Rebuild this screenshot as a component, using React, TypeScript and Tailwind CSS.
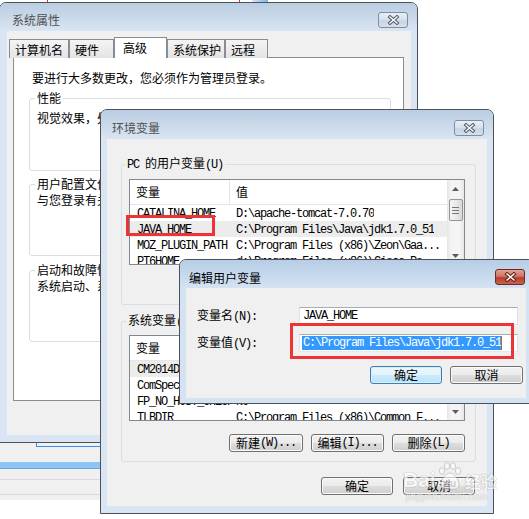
import type { ReactNode } from "react"

type Row = { name: string; value: string; sel?: boolean }

const mono = "font-['Liberation_Mono','Noto_Sans_CJK_SC',monospace] tracking-[-1.2px]"

const M = ({ children }: { children: ReactNode }) => <span className={mono}>{children}</span>

const CloseBtn = ({ red = false, top }: { red?: boolean; top: string }) => (
	<div
		className={`${top} flex h-[16px] w-[30px] shrink-0 items-center justify-center rounded-[3px] border ${
			red
				? "border-[#6e2a22] bg-[linear-gradient(#e2a093,#d27364_45%,#b8402f_55%,#c9604e)]"
				: "border-[#7d8ea3] bg-[linear-gradient(#e8eef5,#d9e3ee_45%,#c7d4e2_55%,#d5e0ec)]"
		}`}>
		<svg width="13" height="10" viewBox="0 0 13 10">
			<path d="M3 2 L10 8 M10 2 L3 8" stroke={red ? "#5b1d15" : "#4b5667"} strokeWidth="3.4" strokeLinecap="square" fill="none" />
			<path d="M3 2 L10 8 M10 2 L3 8" stroke="#ffffff" strokeWidth="1.5" strokeLinecap="square" fill="none" />
		</svg>
	</div>
)

const Win = ({
	title,
	active = false,
	className,
	barClass,
	titleTop,
	closeTop,
	bodyClass,
	children,
}: {
	title: string
	active?: boolean
	className: string
	barClass: string
	titleTop: string
	closeTop: string
	bodyClass: string
	children: ReactNode
}) => (
	<div className={`absolute flex flex-col rounded-t-[7px] border border-[#4d5158] ${active ? "bg-[#d4e3f3]" : "bg-[#d9e5f2]"} ${className}`}>
		<div
			className={`flex shrink-0 items-start justify-between rounded-t-[6px] ${
				active ? "bg-[linear-gradient(#b7cde6,#d4e3f3)]" : "bg-[linear-gradient(#bacde1,#d9e5f2)]"
			} ${barClass}`}>
			<span className={`${titleTop} leading-[16px] ${active ? "text-black" : "text-[#505050]"}`}>{title}</span>
			<CloseBtn red={active} top={closeTop} />
		</div>
		<div className={`bg-[#f0f0f0] ${bodyClass}`}>{children}</div>
	</div>
)

const Btn = ({ children, w, primary = false }: { children: ReactNode; w: string; primary?: boolean }) => (
	<div
		className={`flex h-[18px] ${w} shrink-0 items-center justify-center rounded-[3px] border leading-[14px] ${
			primary
				? "border-[#3c7fb1] bg-[linear-gradient(#edf7fd,#e1f2fc_50%,#cdeafb_50%,#bfe2f6)] shadow-[inset_0_0_0_1px_#d4eefc]"
				: "border-[#707070] bg-[linear-gradient(#f2f2f2,#ebebeb_50%,#dddddd_50%,#cfcfcf)] shadow-[inset_0_0_0_1px_#fbfbfb]"
		}`}>
		{children}
	</div>
)

const Arrow = ({ down = false }: { down?: boolean }) => (
	<div className="flex h-[17px] w-full shrink-0 items-center justify-center">
		<svg width="7" height="4" viewBox="0 0 7 4">
			<path d={down ? "M0 0 L7 0 L3.5 4Z" : "M0 4 L3.5 0 L7 4Z"} fill="#5c5c5c" />
		</svg>
	</div>
)

const ScrollBar = () => (
	<div className="flex w-[17px] shrink-0 flex-col items-center bg-[linear-gradient(90deg,#e6e6e6,#f4f4f4_25%,#f4f4f4_75%,#e6e6e6)]">
		<Arrow />
		<div className="mt-[2px] flex h-[22px] w-[14px] flex-col items-center justify-center gap-[2px] rounded-[2px] border border-[#959595] bg-[linear-gradient(90deg,#f5f5f5,#e9e9e9_50%,#d8d8d8)]">
			<div className="h-px w-[7px] bg-[#777777]" />
			<div className="h-px w-[7px] bg-[#777777]" />
			<div className="h-px w-[7px] bg-[#777777]" />
		</div>
		<div className="flex-1" />
		<Arrow down />
	</div>
)

const VarList = ({ rows, className }: { rows: Row[]; className: string }) => (
	<div className={`flex overflow-hidden border border-[#828790] bg-white ${className}`}>
		<div className="flex min-w-0 flex-1 flex-col">
			<div className="flex h-[25px] shrink-0 border-b border-[#e5e5e5]">
				<div className="flex w-[100px] items-center border-r border-[#e5e5e5] pl-[6px]">变量</div>
				<div className="flex items-center pl-[6px]">值</div>
			</div>
			{rows.map((r) => (
				<div key={r.name} className={`flex h-[16px] shrink-0 items-center whitespace-nowrap ${r.sel ? "bg-[#ececec]" : ""}`}>
					<div className="w-[100px] shrink-0 overflow-hidden pl-[7px]">
						<M>{r.name}</M>
					</div>
					<div className="overflow-hidden pl-[6px]">
						<M>{r.value}</M>
					</div>
				</div>
			))}
		</div>
		<ScrollBar />
	</div>
)

const userVars: Row[] = [
	{ name: "CATALINA_HOME", value: "D:\\apache-tomcat-7.0.70" },
	{ name: "JAVA_HOME", value: "C:\\Program Files\\Java\\jdk1.7.0_51", sel: true },
	{ name: "MOZ_PLUGIN_PATH", value: "C:\\Program Files (x86)\\Zeon\\Gaa..." },
	{ name: "PT6HOME", value: "d:\\Program Files (x86)\\Cisco Pa..." },
	{ name: "TEMP", value: "%USERPROFILE%\\AppData\\Local\\Temp" },
]

const sysVars: Row[] = [
	{ name: "CM2014DIR", value: "C:\\Program Files (x86)\\Common F...", sel: true },
	{ name: "ComSpec", value: "C:\\Windows\\system32\\cmd.exe" },
	{ name: "FP_NO_HOST_CHECK", value: "NO" },
	{ name: "TLBDIR", value: "C:\\Program Files (x86)\\Common F..." },
]

const tabs = [
	{ label: "计算机名", w: "w-[60px]" },
	{ label: "硬件", w: "w-[45px]" },
	{ label: "高级", w: "w-[53px]", on: true },
	{ label: "系统保护", w: "w-[58px]" },
	{ label: "远程", w: "w-[43px]" },
]

const groups = [
	{ label: "性能", text: "视觉效果，处理器计划，内存使用，以及虚拟内存", h: "h-[81px]", gap: "mt-[4px]", tmt: "mt-[4px]" },
	{ label: "用户配置文件", text: "与您登录有关的桌面设置", h: "h-[80px]", gap: "mt-[5px]", tmt: "mt-0" },
	{ label: "启动和故障恢复", text: "系统启动、系统故障和调试信息", h: "h-[80px]", gap: "mt-[6px]", tmt: "mt-0" },
]

const App = () => {
	return (
		<div className="relative h-[519px] w-[529px] overflow-hidden bg-white font-['Noto_Sans_CJK_SC',sans-serif] text-[12px] leading-[16px] text-black">
			{/* window peeking out behind, bottom left */}
			<div className="absolute left-0 top-[436px] flex h-[64px] w-[110px] flex-col bg-[#f0f0f0]">
				<div className="ml-[36px] h-[11px] border-b border-l border-[#3c8ee8]" />
				<div className="mt-[15px] h-[7px] border-b border-[#6fa6d8] bg-[#8cc4f6]" />
				<div className="mt-[10px] h-px bg-[#dadada]" />
				<div className="mt-[14px] h-px bg-[#dadada]" />
			</div>
			<div className="absolute left-[47px] top-0 h-[2px] w-px bg-[#e03030]" />
			<div className="absolute left-[239px] top-0 h-[2px] w-px bg-[#e03030]" />
			<div className="absolute left-[252px] top-0 h-[4px] w-[16px] bg-[linear-gradient(90deg,#d6e8fa,#7fb2e8)]" />

			<Win
				title="系统属性"
				className="left-[-1px] top-[2px] h-[441px] w-[419px]"
				barClass="h-[28px] pl-[12px] pr-[9px]"
				titleTop="mt-[9px]"
				closeTop="mt-[9px]"
				bodyClass="ml-[7px] mr-[6px] mb-[7px] h-[404px] pt-[6px]">
				<div className="flex h-[21px] items-end pl-[2px]">
					{tabs.map((t) =>
						t.on ? (
							<div key={t.label} className={`relative z-10 flex h-[21px] ${t.w} items-center border border-b-0 border-[#898c95] bg-white pl-[8px]`}>
								{t.label}
							</div>
						) : (
							<div
								key={t.label}
								className={`flex h-[19px] ${t.w} items-center border border-b-0 border-[#898c95] bg-[linear-gradient(#f4f4f4,#e4e4e4)] pl-[5px] pt-[1px]`}>
								{t.label}
							</div>
						)
					)}
				</div>
				<div className="-mt-px ml-[6px] h-[344px] w-[391px] border border-[#898c95] bg-white pt-[12px]">
					<p className="whitespace-nowrap pl-[18px]">要进行大多数更改，您必须作为管理员登录。</p>
					{groups.map((g) => (
						<fieldset key={g.label} className={`${g.gap} ml-[15px] ${g.h} w-[362px] rounded-[3px] border border-[#d5dfe5]`}>
							<legend className="ml-[5px] px-[2px] leading-[16px]">{g.label}</legend>
							<p className={`${g.tmt} whitespace-nowrap pl-[7px]`}>{g.text}</p>
						</fieldset>
					))}
				</div>
			</Win>

			<Win
				title="环境变量"
				className="left-[100px] top-[109px] h-[405px] w-[394px]"
				barClass="h-[29px] pl-[11px] pr-[9px]"
				titleTop="mt-[10px]"
				closeTop="mt-[10px]"
				bodyClass="ml-[6px] mr-[6px] mb-[7px] flex h-[367px] flex-col pl-[14px] pt-[16px]">
				<fieldset className="h-[150px] w-[355px] rounded-[3px] border border-[#d5dfe5]">
					<legend className="ml-[3px] px-[2px] leading-[16px]">
						<M>PC </M>的用户变量<M>(U)</M>
					</legend>
					<VarList rows={userVars} className="ml-[7px] mt-[6px] h-[86px] w-[336px]" />
				</fieldset>
				<fieldset className="mt-[7px] h-[150px] w-[355px] rounded-[3px] border border-[#d5dfe5]">
					<legend className="ml-[4px] px-[2px] leading-[16px]">
						系统变量<M>(S)</M>
					</legend>
					<VarList rows={sysVars} className="ml-[7px] mt-[5px] h-[86px] w-[336px]" />
					<div className="mt-[13px] flex justify-end gap-[8px] pr-[10px]">
						<Btn w="w-[74px]">
							新建<M>(W)...</M>
						</Btn>
						<Btn w="w-[73px]">
							编辑<M>(I)...</M>
						</Btn>
						<Btn w="w-[73px]">
							删除<M>(L)</M>
						</Btn>
					</div>
				</fieldset>
				<div className="mt-[15px] flex justify-end gap-[10px] pr-[12px]">
					<Btn w="w-[72px]">确定</Btn>
					<Btn w="w-[72px]">取消</Btn>
				</div>
			</Win>

			<div className="absolute left-[126px] top-[215px] h-[21px] w-[89px] border-[3px] border-[#ec3437]" />

			<Win
				title="编辑用户变量"
				active
				className="left-[179px] top-[259px] h-[145px] w-[356px]"
				barClass="h-[28px] pl-[9px] pr-[9px]"
				titleTop="mt-[10px]"
				closeTop="mt-[9px]"
				bodyClass="ml-[6px] mr-[8px] mb-[5px] flex h-[110px] flex-col pl-[11px] pt-[19px]">
				<div className="flex h-[18px] items-center">
					<div className="w-[102px] whitespace-nowrap">
						变量名<M>(N):</M>
					</div>
					<div className="flex h-[18px] w-[219px] items-center border border-[#abadb3] border-b-[#e3e9ef] border-l-[#e2e3ea] border-r-[#dbdfe6] bg-white pl-[3px]">
						<M>JAVA_HOME</M>
					</div>
				</div>
				<div className="mt-[9px] flex h-[18px] items-center">
					<div className="w-[102px] whitespace-nowrap">
						变量值<M>(V):</M>
					</div>
					<div className="flex h-[18px] w-[219px] items-center border border-[#abadb3] border-b-[#e3e9ef] border-l-[#e2e3ea] border-r-[#dbdfe6] bg-white pl-[2px]">
						<span className={`${mono} inline-block h-[14px] whitespace-nowrap bg-[#3399ff] pl-[1px] leading-[14px] text-white`}>
							C:\Program Files\Java\jdk1.7.0_51
						</span>
						<div className="h-[14px] w-px bg-[#c06a10]" />
					</div>
				</div>
				<div className="mt-[14px] flex justify-end gap-[8px] pr-[3px]">
					<Btn w="w-[72px]" primary>
						确定
					</Btn>
					<Btn w="w-[73px]">取消</Btn>
				</div>
			</Win>

			<div className="absolute left-[290px] top-[323px] h-[36px] w-[224px] border-[3px] border-[#ec3437]" />

			{/* watermark */}
			<div className="pointer-events-none absolute left-[403px] top-[461px] flex flex-col items-start opacity-60">
				<div className="flex items-end">
					<span className="font-['Liberation_Sans',sans-serif] text-[21px] font-bold leading-[22px] text-white [text-shadow:0_0_1px_#8a8a8a,0_0_1px_#8a8a8a]">
						Bai
					</span>
					<svg width="26" height="30" viewBox="0 0 26 30" className="ml-[1px]">
						<g fill="#ffffff" stroke="#a0a0a0" strokeWidth="0.8">
							<ellipse cx="5" cy="10" rx="2.6" ry="3.4" />
							<ellipse cx="10" cy="5" rx="2.6" ry="3.4" />
							<ellipse cx="16" cy="5" rx="2.6" ry="3.4" />
							<ellipse cx="21" cy="10" rx="2.6" ry="3.4" />
							<path d="M13 12 C8 12 4 19 4 24 C4 28 8 29 13 28 C18 29 22 28 22 24 C22 19 18 12 13 12Z" />
						</g>
						<text x="13" y="26" textAnchor="middle" fontSize="10" fontWeight="bold" fontFamily="Liberation Sans" fill="#b5b5b5">
							du
						</text>
					</svg>
					<span className="ml-[2px] text-[16px] font-bold leading-[20px] text-white [text-shadow:0_0_1px_#8a8a8a,0_0_1px_#8a8a8a]">经验</span>
				</div>
				<span className="ml-[3px] font-['Liberation_Sans',sans-serif] text-[10px] leading-[12px] text-white [text-shadow:0_0_1px_#9a9a9a,0_0_1px_#9a9a9a]">
					jingyan.baidu.com
				</span>
			</div>
		</div>
	)
}

export default App
